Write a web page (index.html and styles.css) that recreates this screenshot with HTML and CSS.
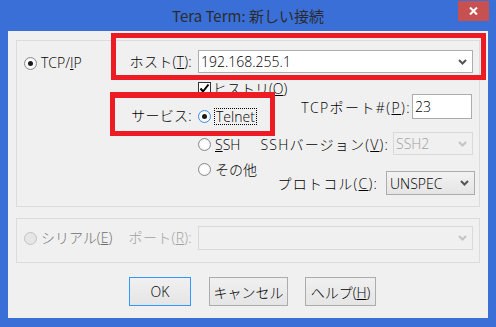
FILE: index.html
```html
<!DOCTYPE html>
<html lang="ja">
<head>
  <meta charset="UTF-8">
  <title>Tera Term: 新しい接続</title>
  <link rel="stylesheet" href="styles.css">
</head>
<body>
  <div class="window">
    <div class="titlebar">
      <span></span>
      <span class="title">Tera Term: 新しい接続</span>
      <span class="close-btn">
        <svg width="9" height="8" viewBox="0 0 9 8"><path d="M1 0.5 L8 7.5 M8 0.5 L1 7.5" stroke="#fff" stroke-width="2" fill="none"/></svg>
      </span>
    </div>

    <div class="client">
      <!-- TCP/IP -->
      <div class="group group-tcp">
        <div class="host-row">
          <div class="proto proto-tcp"><span class="radio checked"></span><span>TCP/<u>I</u>P</span></div>
          <span class="label">ホスト(<u>T</u>):</span>
          <div class="combo host-combo">
            <span>192.168.255.1</span>
            <svg class="chev" width="9" height="6" viewBox="0 0 9 6"><path d="M1 1 L4.5 4.5 L8 1" stroke="#555" stroke-width="2" fill="none"/></svg>
          </div>
        </div>
        <div class="lower">
          <span class="label service-label">サービス:</span>
          <div class="options">
            <div class="opt opt-history">
              <svg class="checkbox" width="13" height="13" viewBox="0 0 13 13"><rect x="0.5" y="0.5" width="12" height="12" fill="#fff" stroke="#333"/><path d="M2.5 6.5 L5 9.5 L10.5 2.5" stroke="#000" stroke-width="2" fill="none"/></svg>
              <span class="opt-text-cb">ヒストリ(<u>O</u>)</span>
            </div>
            <div class="opt opt-telnet"><span class="radio checked focus"></span><span class="focus-text">Telnet</span></div>
            <div class="opt opt-ssh"><span class="radio"></span><span class="opt-text"><u>S</u>SH</span></div>
            <div class="opt opt-other"><span class="radio"></span><span class="opt-text">その他</span></div>
          </div>
          <div class="settings">
            <div class="set-row port-row">
              <span class="set-label">TCPポート#(<u>P</u>):</span>
              <div class="edit">23</div>
            </div>
            <div class="set-row ver-row">
              <span class="set-label">SSHバージョン(<u>V</u>):</span>
              <div class="combo combo-off ver-combo">
                <span>SSH2</span>
                <svg class="chev" width="9" height="6" viewBox="0 0 9 6"><path d="M1 1 L4.5 4.5 L8 1" stroke="#c4c4c4" stroke-width="2" fill="none"/></svg>
              </div>
            </div>
            <div class="set-row proto-row">
              <span class="set-label">プロトコル(<u>C</u>):</span>
              <div class="combo combo-list proto-combo">
                <span>UNSPEC</span>
                <svg class="chev" width="9" height="6" viewBox="0 0 9 6"><path d="M1 1 L4.5 4.5 L8 1" stroke="#555" stroke-width="2" fill="none"/></svg>
              </div>
            </div>
          </div>
        </div>
      </div>

      <!-- シリアル -->
      <div class="group group-serial">
        <div class="proto proto-serial"><span class="radio off"></span><span>シリアル(<u>E</u>)</span></div>
        <span class="label label-off">ポート(<u>R</u>):</span>
        <div class="combo combo-off serial-combo">
          <span></span>
          <svg class="chev" width="9" height="6" viewBox="0 0 9 6"><path d="M1 1 L4.5 4.5 L8 1" stroke="#c4c4c4" stroke-width="2" fill="none"/></svg>
        </div>
      </div>

      <div class="buttons">
        <button class="btn btn-ok">OK</button>
        <button class="btn btn-cancel">キャンセル</button>
        <button class="btn btn-help">ヘルプ(<u>H</u>)</button>
      </div>
    </div>

    <!-- 注釈の赤枠 -->
    <div class="mark mark-host"></div>
    <div class="mark mark-service"></div>
  </div>
</body>
</html>
```

FILE: styles.css
```css
* {
  box-sizing: border-box;
}
body {
  margin: 0;
  background: #3b6fd8;
  font-family: "Open Sans", "Noto Sans CJK JP", sans-serif;
  font-size: 14px;
  font-weight: 300;
  color: #000;
}
.window {
  position: relative;
  width: 496px;
  height: 327px;
  background: #3b6fd8;
}
.titlebar {
  display: grid;
  grid-template-columns: 1fr auto 1fr;
  height: 31px;
}
.title {
  font-family: "Noto Sans CJK JP", sans-serif;
  font-size: 15px;
  font-weight: 400;
  line-height: 31px;
  color: #2b2b2b;
}
.close-btn {
  justify-self: end;
  align-self: start;
  margin: 1px 7px 0 0;
  width: 31px;
  height: 20px;
  background: #c75050;
  display: flex;
  align-items: center;
  justify-content: center;
}
.client {
  margin: 0 8px;
  height: 287px;
  background: #f0f0f0;
  padding-top: 9px;
}
.group {
  margin: 0 8px;
  border: 1px solid #dcdcdc;
}
.group-tcp {
  height: 167px;
  padding: 9px 6px 0 0;
}
.host-row {
  display: flex;
  align-items: center;
  height: 23px;
}
.proto {
  width: 103px;
  flex: none;
  display: flex;
  align-items: center;
  gap: 4px;
  padding-left: 7px;
  line-height: 16px;
  white-space: nowrap;
}
.proto-tcp {
  margin-top: 3px;
}
.label {
  width: 72px;
  flex: none;
  margin-right: 6px;
  text-align: right;
  line-height: 16px;
  white-space: nowrap;
  letter-spacing: 0.3px;
}
.label-off {
  color: #a0a0a0;
}
.combo {
  display: flex;
  align-items: center;
  justify-content: space-between;
  border: 1px solid #acacac;
  background: #fff;
  padding: 0 5px 0 2px;
  white-space: nowrap;
}
.host-combo {
  flex: 1;
  height: 23px;
}
.combo-off {
  border-color: #d9d9d9;
  background: #f0f0f0;
  color: #a0a0a0;
}
.combo-list {
  background: linear-gradient(#f2f2f2, #e5e5e5);
  padding-left: 3px;
}
.radio {
  width: 13px;
  height: 13px;
  flex: none;
  border: 1px solid #8a8a8a;
  border-radius: 50%;
  background: radial-gradient(circle, #fff 40%, #e6e6e6 100%);
  display: flex;
  align-items: center;
  justify-content: center;
}
.radio.checked::after {
  content: "";
  width: 5px;
  height: 5px;
  border-radius: 50%;
  background: #1a1a1a;
}
.radio.focus {
  border-color: #3c8ee6;
}
.radio.off {
  border-color: #c2c2c2;
  background: #e6e6e6;
}
.lower {
  display: flex;
  align-items: flex-start;
}
.service-label {
  margin-left: 103px;
  margin-top: 35px;
}
.options {
  width: 60px;
  flex: none;
  display: flex;
  flex-direction: column;
}
.opt {
  display: flex;
  align-items: center;
  height: 16px;
  white-space: nowrap;
}
.opt-history {
  margin-top: 7px;
}
.opt-telnet {
  margin-top: 12px;
}
.opt-ssh {
  margin-top: 12px;
}
.opt-other {
  margin-top: 9px;
}
.checkbox {
  flex: none;
}
.opt-text-cb {
  margin-left: 2px;
}
.opt-text {
  margin-left: 4px;
}
.focus-text {
  margin-left: 3px;
  padding: 0 1px;
  border: 1px dotted #000;
  line-height: 15px;
}
.settings {
  flex: 1;
  display: flex;
  flex-direction: column;
  align-items: flex-end;
  min-width: 0;
}
.set-row {
  display: flex;
  align-items: center;
  white-space: nowrap;
}
.set-label {
  letter-spacing: 1.2px;
}
.port-row {
  margin-top: 21px;
  margin-right: 1px;
  gap: 1px;
}
.port-row .set-label {
  letter-spacing: 1.4px;
}
.edit {
  width: 60px;
  height: 25px;
  border: 1px solid #acacac;
  background: #fff;
  padding-left: 2px;
  line-height: 23px;
}
.ver-row {
  margin-top: 13px;
  gap: 4px;
}
.ver-combo {
  width: 80px;
  height: 23px;
}
.proto-row {
  margin-top: 16px;
  margin-right: -2px;
  gap: 8px;
}
.proto-combo {
  width: 89px;
  height: 24px;
}
.group-serial {
  margin-top: 11px;
  height: 45px;
  padding: 7px 6px 0 0;
  display: flex;
  align-items: flex-start;
}
.proto-serial {
  color: #6d6d6d;
}
.serial-combo {
  flex: 1;
  height: 24px;
}
.group-serial .proto,
.group-serial .label {
  margin-top: 4px;
}
.buttons {
  display: flex;
  gap: 18px;
  margin-top: 14px;
  padding-left: 121px;
}
.btn {
  height: 29px;
  padding: 0;
  border: 1px solid #acacac;
  background: linear-gradient(#f0f0f0, #e5e5e5);
  font: inherit;
  color: #000;
}
.btn-ok {
  width: 62px;
  border-color: #3399ff;
}
.btn-cancel {
  width: 79px;
}
.btn-help {
  width: 71px;
  margin-left: -1px;
}
.mark {
  position: absolute;
  border: 5px solid #ed1c24;
}
.mark-host {
  left: 111px;
  top: 33px;
  width: 375px;
  height: 47px;
}
.mark-service {
  left: 110px;
  top: 92px;
  width: 165px;
  height: 44px;
  border-top-width: 6px;
}
```
